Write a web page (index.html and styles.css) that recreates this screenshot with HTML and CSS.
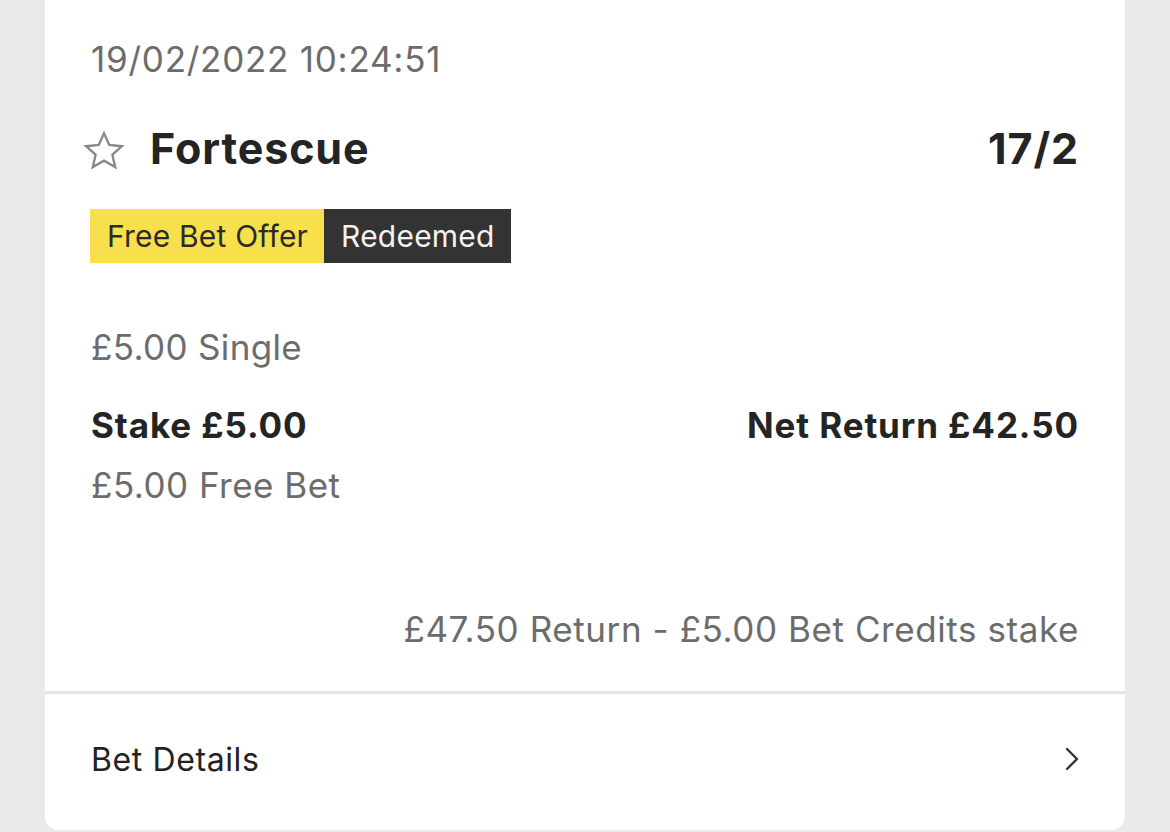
FILE: index.html
```html
<!DOCTYPE html>
<html>
<head>
<meta charset="utf-8">
<link rel="stylesheet" href="styles.css">
</head>
<body>
<div class="card">
  <div class="main">
    <div class="date">19/02/2022 10:24:51</div>
    <div class="title-row">
      <div class="title-left">
        <svg class="star" viewBox="0 0 24 24" width="46" height="46"><path d="M12 2.8l2.75 6.05 6.6.65-4.97 4.4 1.45 6.5L12 17.05 6.17 20.4l1.45-6.5L2.65 9.5l6.6-.65z" fill="none" stroke="#8a8a8a" stroke-width="1.25" stroke-linejoin="miter"/></svg>
        <span class="name">Fortescue</span>
      </div>
      <span class="odds">17/2</span>
    </div>
    <div class="badges">
      <span class="badge badge-yellow">Free Bet Offer</span><span class="badge badge-dark">Redeemed</span>
    </div>
    <div class="muted single">£5.00 Single</div>
    <div class="stake-row">
      <span class="bold">Stake £5.00</span>
      <span class="bold">Net Return £42.50</span>
    </div>
    <div class="muted freebet">£5.00 Free Bet</div>
    <div class="muted return">£47.50 Return - £5.00 Bet Credits stake</div>
  </div>
  <div class="details">
    <span class="details-label">Bet Details</span>
    <svg class="chev" viewBox="0 0 14 24" width="14" height="24"><path d="M2 2l10 10-10 10" fill="none" stroke="#333" stroke-width="2.4" stroke-linecap="round" stroke-linejoin="round"/></svg>
  </div>
</div>
</body>
</html>
```
FILE: styles.css
```css
html, body {
  margin: 0;
  padding: 0;
}
body {
  background: #e9eaec;
  padding: 0 45px;
  font-family: Inter, "Noto Sans", "Liberation Sans", sans-serif;
  height: 832px;
  overflow: hidden;
}
.card {
  background: #fff;
  border-radius: 0 0 14px 14px;
  height: 830px;
  display: flex;
  flex-direction: column;
}
.main {
  padding: 37px 46px 40px 46px;
  border-bottom: 3px solid #e4e4e6;
}
.date {
  font-size: 35px;
  line-height: 44px;
  color: #6c6c6c;
  letter-spacing: 0.75px;
}
.title-row {
  margin-top: 39px;
  height: 56px;
  display: flex;
  align-items: center;
  justify-content: space-between;
}
.title-left {
  display: flex;
  align-items: center;
  gap: 23px;
  margin-left: -10px;
}
.star {
  display: block;
  margin-top: 6px;
}
.name, .odds {
  font-size: 43px;
  font-weight: 700;
  color: #242424;
  letter-spacing: 0.9px;
}
.badges {
  margin-top: 33px;
  display: flex;
  margin-left: -1px;
}
.badge {
  height: 54px;
  display: flex;
  align-items: center;
  font-size: 30px;
  letter-spacing: 0.2px;
  padding: 0 16px 0 17px;
}
.badge-yellow {
  background: #f8e04c;
  color: #2a2a2a;
}
.badge-dark {
  background: #333333;
  color: #f2f2f2;
}
.muted {
  font-size: 35px;
  line-height: 44px;
  color: #6c6c6c;
}
.single {
  margin-top: 62px;
  letter-spacing: 0.35px;
}
.stake-row {
  margin-top: 34px;
  display: flex;
  justify-content: space-between;
  line-height: 44px;
}
.bold {
  font-size: 35px;
  font-weight: 700;
  color: #242424;
  letter-spacing: 0.9px;
}
.freebet {
  margin-top: 16px;
  letter-spacing: 0.5px;
}
.return {
  margin-top: 100px;
  text-align: right;
  letter-spacing: 0.58px;
}
.details {
  height: 130px;
  display: flex;
  align-items: center;
  justify-content: space-between;
  padding: 0 46px 0 46px;
}
.details-label {
  font-size: 32px;
  color: #222;
  letter-spacing: 0.6px;
}
.chev {
  display: block;
}
```
